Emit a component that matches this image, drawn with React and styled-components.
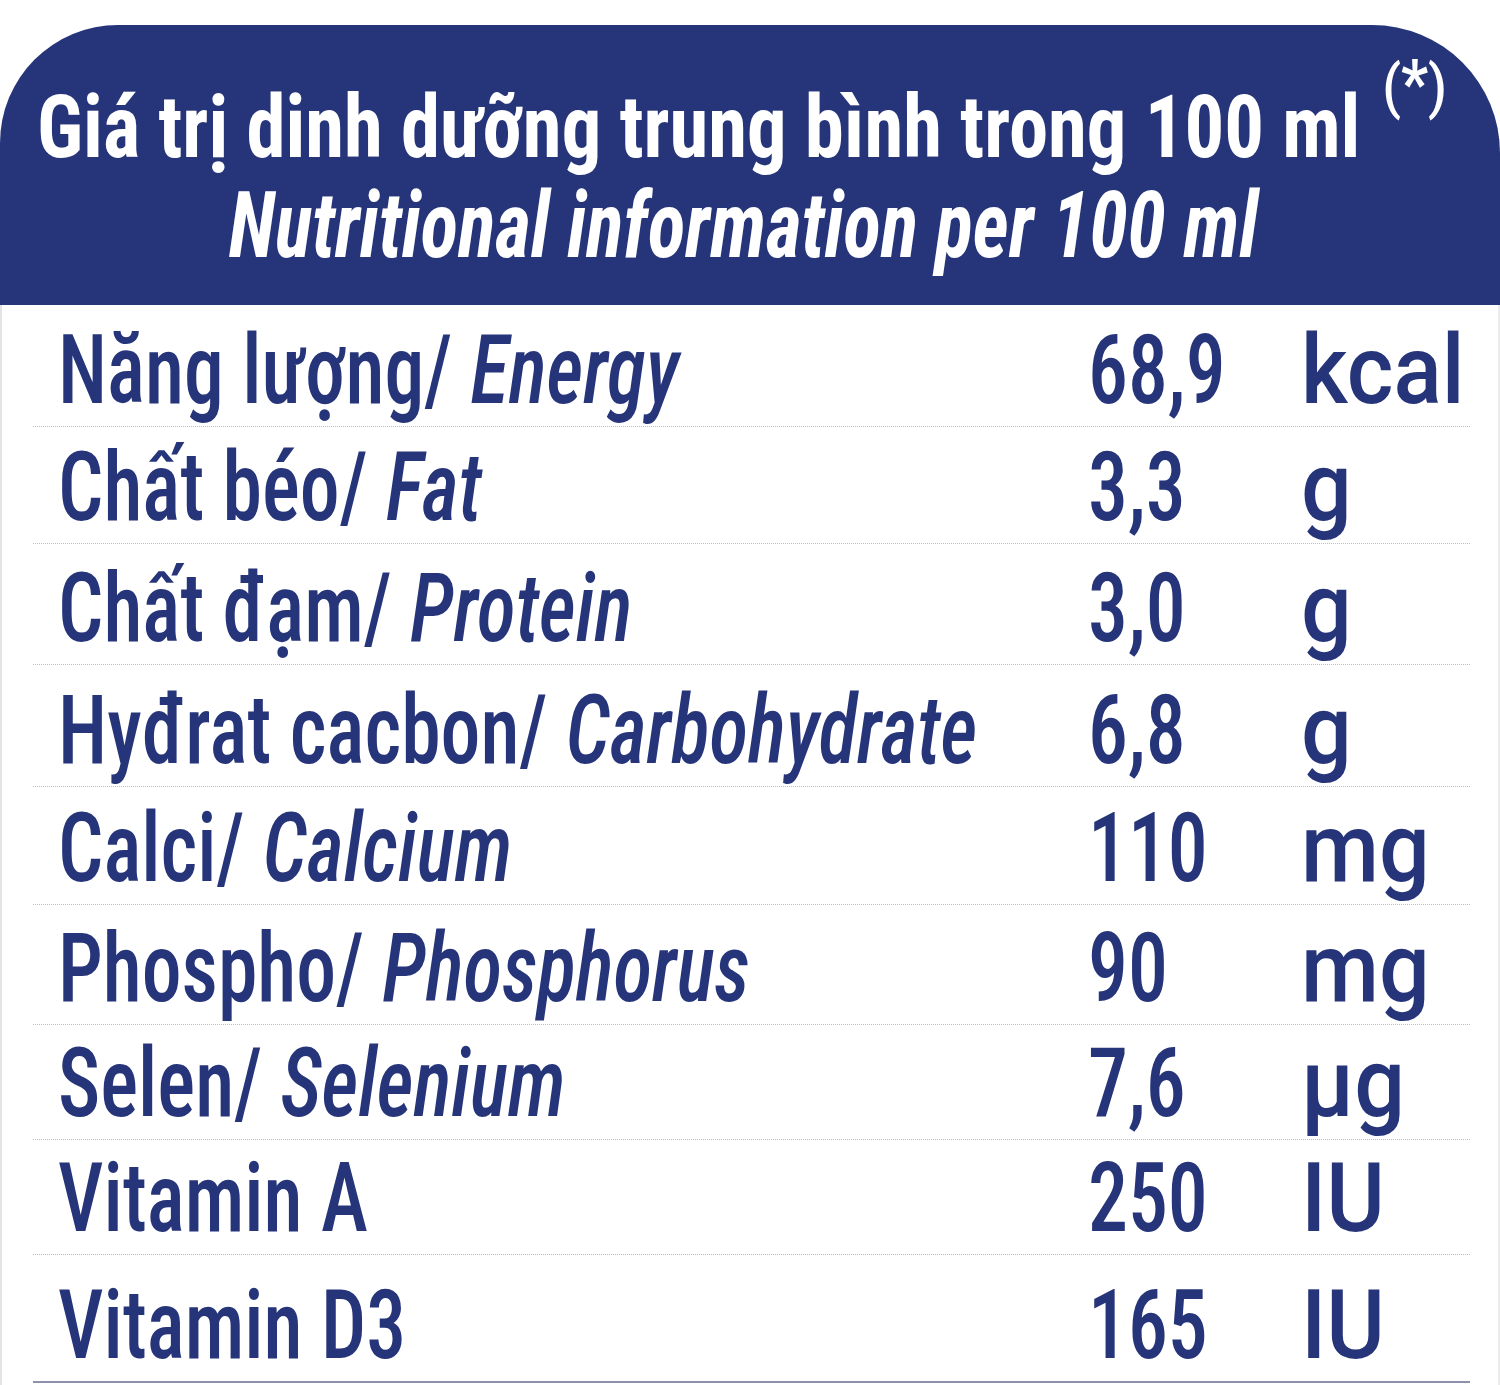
import React from "react";
import styled, { createGlobalStyle } from "styled-components";

const GlobalStyle = createGlobalStyle`
  html, body { margin: 0; padding: 0; background: #ffffff; }
  body { font-family: "Roboto Condensed", Roboto, "Liberation Sans", sans-serif; }
`;

const BLUE = "#26357a";
const CONDENSED = `"Roboto Condensed", Roboto, "Liberation Sans", sans-serif`;

const Card = styled.div`
  width: 1500px;
  padding-top: 25px;
  box-sizing: border-box;
`;

const Header = styled.header`
  background: ${BLUE};
  height: 280px;
  border-radius: 118px 128px 0 0;
  display: flex;
  flex-direction: column;
  align-items: center;
  padding-top: 59px;
  box-sizing: border-box;
  color: #ffffff;
  font-family: ${CONDENSED};
`;

const Squeeze = styled.span`
  display: inline-block;
  white-space: nowrap;
  transform: scaleX(${(p) => p.$k});
  transform-origin: ${(p) => p.$origin || "left"} center;
`;

const TitleVi = styled(Squeeze)`
  font-size: 87px;
  font-weight: 700;
  line-height: 1;
  margin-left: -16px;
`;

const Asterisk = styled.span`
  font-family: Roboto, sans-serif;
  font-size: 60px;
  font-weight: 500;
  line-height: 0;
  vertical-align: 50px;
  margin-left: 24px;
`;

const Star = styled.span`
  font-size: 66px;
  font-weight: 700;
`;

const TitleEn = styled(Squeeze)`
  font-size: 92px;
  font-weight: 700;
  font-style: italic;
  line-height: 1;
  margin-top: 9px;
  margin-left: -14px;
`;

const Body = styled.div`
  border-left: 2px solid #e4e4e8;
  border-right: 2px solid #ececef;
  padding: 0 28px 2px 31px;
`;

const Row = styled.div`
  display: grid;
  grid-template-columns: 1030px 213px 1fr;
  align-items: end;
  height: ${(p) => p.$h}px;
  box-sizing: border-box;
  padding: 0 0 8px 25px;
  border-bottom: ${(p) => (p.$last ? "2px solid #8d90aa" : "1px dotted #b9bcd2")};
  color: ${BLUE};
  line-height: 1;
`;

const Cell = styled.div`
  font-family: ${(p) => (p.$plain ? "Roboto, sans-serif" : CONDENSED)};
  font-size: 96px;
  font-weight: 500;
  white-space: nowrap;
`;

const En = styled.em`
  font-style: italic;
`;

const rows = [
  { vi: "Năng lượng/ ", en: "Energy", v: "68,9", u: "kcal", h: 122 },
  { vi: "Chất béo/ ", en: "Fat", v: "3,3", u: "g", h: 117 },
  { vi: "Chất đạm/ ", en: "Protein", v: "3,0", u: "g", h: 121 },
  { vi: "Hyđrat cacbon/ ", en: "Carbohydrate", v: "6,8", u: "g", h: 122 },
  { vi: "Calci/ ", en: "Calcium", v: "110", u: "mg", h: 118 },
  { vi: "Phospho/ ", en: "Phosphorus", v: "90", u: "mg", h: 120 },
  { vi: "Selen/ ", en: "Selenium", v: "7,6", u: "µg", h: 115 },
  { vi: "Vitamin A", en: "", v: "250", u: "IU", h: 115 },
  { vi: "Vitamin D3", en: "", v: "165", u: "IU", h: 128 },
];

export default function App() {
  return (
    <>
      <GlobalStyle />
      <Card>
        <Header>
          <TitleVi $k={0.905} $origin="center">
            Giá trị dinh dưỡng trung bình trong 100 ml
            <Asterisk>
              (<Star>*</Star>)
            </Asterisk>
          </TitleVi>
          <TitleEn $k={0.843} $origin="center">
            Nutritional information per 100 ml
          </TitleEn>
        </Header>
        <Body>
          {rows.map((r, i) => (
            <Row key={i} $h={r.h} $last={i === rows.length - 1}>
              <Cell>
                <Squeeze $k={0.831}>
                  {r.vi}
                  {r.en && <En>{r.en}</En>}
                </Squeeze>
              </Cell>
              <Cell>
                <Squeeze $k={0.832}>{r.v}</Squeeze>
              </Cell>
              <Cell $plain>
                <Squeeze $k={0.933}>{r.u}</Squeeze>
              </Cell>
            </Row>
          ))}
        </Body>
      </Card>
    </>
  );
}
